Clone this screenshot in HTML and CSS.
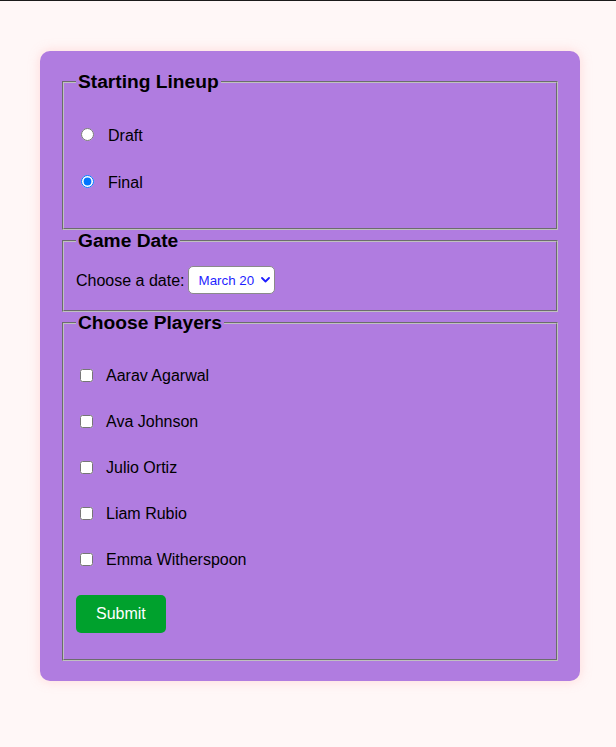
FILE: index.html
```html
<!DOCTYPE html>
<html lang="en">
<head>
<meta charset="utf-8">
<title>Starting Lineup</title>
<link rel="stylesheet" href="styles.css">
</head>
<body>
<div class="topline"></div>
<main class="page">
  <form class="card">
    <fieldset class="group lineup">
      <legend>Starting Lineup</legend>
      <div class="option option-radio">
        <input type="radio" name="lineup" id="draft">
        <label for="draft">Draft</label>
      </div>
      <div class="option option-radio">
        <input type="radio" name="lineup" id="final" checked>
        <label for="final">Final</label>
      </div>
    </fieldset>
    <fieldset class="group game-date">
      <legend>Game Date</legend>
      <div class="date-row">
        <label for="date">Choose a date:</label>
        <span class="select-box">
          <select id="date"><option>March 20</option></select>
          <svg class="chev" width="9" height="6" viewBox="0 0 9 6" aria-hidden="true"><path d="M1 1 L4.5 4.5 L8 1" fill="none" stroke="#1f1fff" stroke-width="1.8" stroke-linecap="round" stroke-linejoin="round"/></svg>
        </span>
      </div>
    </fieldset>
    <fieldset class="group players">
      <legend>Choose Players</legend>
      <div class="option option-check"><input type="checkbox" id="p1"><label for="p1">Aarav Agarwal</label></div>
      <div class="option option-check"><input type="checkbox" id="p2"><label for="p2">Ava Johnson</label></div>
      <div class="option option-check"><input type="checkbox" id="p3"><label for="p3">Julio Ortiz</label></div>
      <div class="option option-check"><input type="checkbox" id="p4"><label for="p4">Liam Rubio</label></div>
      <div class="option option-check"><input type="checkbox" id="p5"><label for="p5">Emma Witherspoon</label></div>
      <button type="button" class="submit">Submit</button>
    </fieldset>
  </form>
</main>
</body>
</html>
```

FILE: styles.css
```css
html {
  background: #fff7f7;
}
body {
  margin: 0;
  background: #fff7f7;
  font-family: "Liberation Sans", Arial, sans-serif;
  font-size: 16px;
  color: #000;
  min-height: 747px;
}
.topline {
  height: 1px;
  background: #1b1b1b;
}
.page {
  padding-top: 50px;
}
.card {
  width: 500px;
  margin: 0 0 0 40px;
  padding: 20px;
  background: #b07ce0;
  border-radius: 10px;
  box-shadow: 0 0 12px rgba(255, 160, 160, 0.35);
}
.group {
  margin: 0 2px;
  border: 2px groove rgb(192, 192, 192);
  padding-left: 12px;
  padding-right: 12px;
}
.group legend {
  font-size: 19.2px;
  font-weight: bold;
  line-height: 22px;
  padding: 0 2px;
}
.lineup {
  padding-top: 18px;
  padding-bottom: 23px;
}
.game-date {
  padding-top: 14px;
  padding-bottom: 16px;
}
.players {
  padding-top: 18px;
  padding-bottom: 26px;
}
.option {
  display: flex;
  align-items: center;
  line-height: 18px;
}
.option-radio {
  height: 47px;
}
.option-check {
  height: 46px;
}
.option input {
  margin: 0 3px 0 5px;
}
.option-check input {
  margin-left: 4px;
}
.option label {
  margin-left: 10px;
  padding-top: 2px;
}
.option-radio label {
  margin-left: 11px;
}
.date-row {
  display: flex;
  align-items: center;
  gap: 3px;
  height: 28px;
}
.date-row label {
  padding-top: 1px;
}
.select-box {
  display: inline-flex;
  align-items: center;
  box-sizing: border-box;
  height: 28px;
  padding: 0 4px 0 10px;
  gap: 6px;
  background: #fff;
  border: 1px solid #8a8a8a;
  border-radius: 5px;
}
.select-box select {
  appearance: none;
  -webkit-appearance: none;
  border: none;
  background: transparent;
  padding: 0;
  margin: 0;
  font-family: "Liberation Sans", Arial, sans-serif;
  font-size: 13.33px;
  color: #1f1fff;
  outline: none;
}
.chev {
  display: block;
}
.submit {
  display: block;
  margin-top: 13px;
  padding: 10px 20px;
  border: none;
  border-radius: 5px;
  background: #00a12d;
  color: #fff;
  font-family: "Liberation Sans", Arial, sans-serif;
  font-size: 16px;
  line-height: 18px;
}
```
